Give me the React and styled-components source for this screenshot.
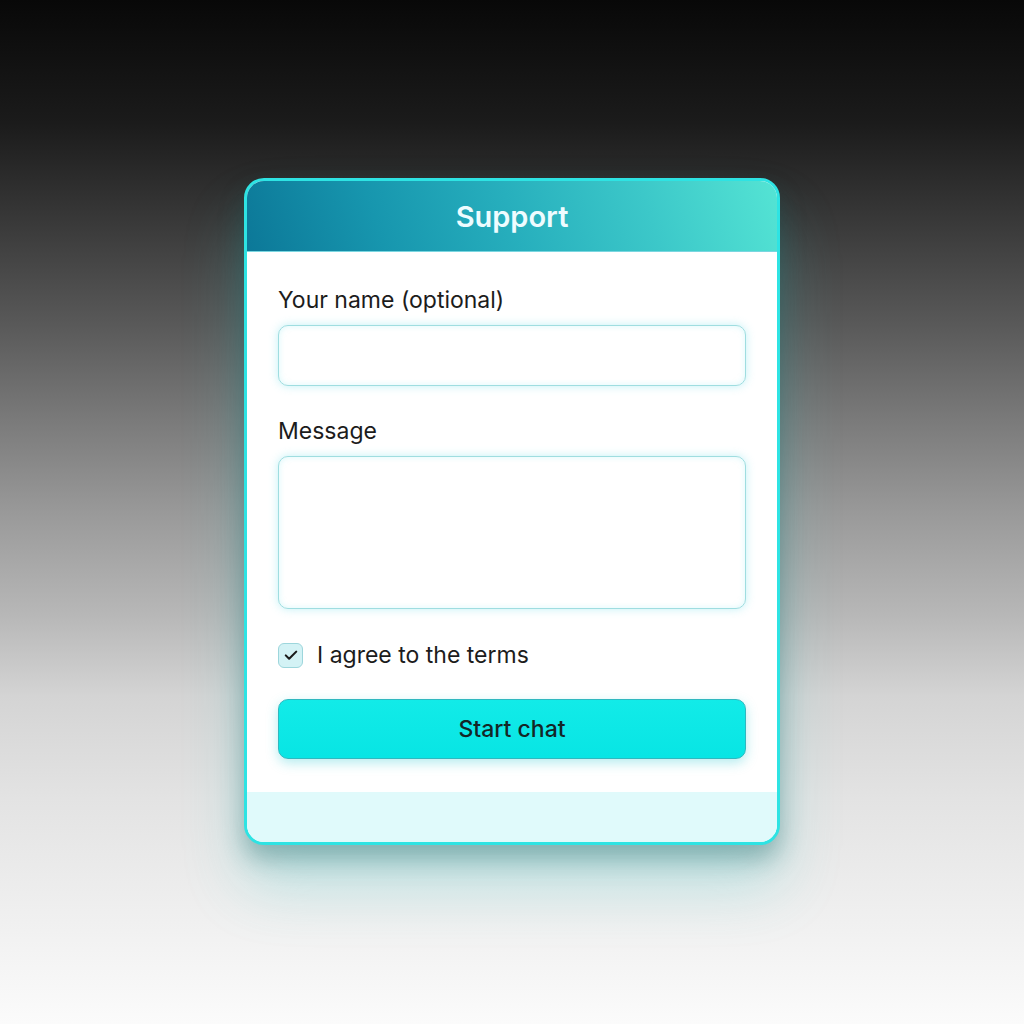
import React from "react";
import styled, { createGlobalStyle } from "styled-components";

const Global = createGlobalStyle`
  html, body { margin: 0; padding: 0; }
  body {
    font-family: Inter, "Noto Sans", sans-serif;
    background: linear-gradient(180deg, #080808 0%, #1b1b1b 12%, #3a3a3a 22%, #5a5a5a 32%, #7a7a7a 41%, #999999 50%, #b7b7b7 60%, #d4d4d4 68%, #e3e3e3 78%, #f0f0f0 90%, #fbfbfb 100%);
    min-height: 1024px;
  }
`;

const Page = styled.div`
  height: 1024px;
  display: flex;
  justify-content: center;
  padding-top: 178px;
  box-sizing: border-box;
`;

const Card = styled.div`
  width: 536px;
  height: 667px;
  box-sizing: border-box;
  border: 3px solid #2ee3e3;
  border-radius: 20px;
  overflow: hidden;
  display: flex;
  flex-direction: column;
  background: #ffffff;
  box-shadow: 0 14px 24px rgba(20, 90, 90, 0.35), 0 40px 60px rgba(60, 200, 200, 0.28);
`;

const Header = styled.div`
  height: 70px;
  display: flex;
  align-items: center;
  justify-content: center;
  background: linear-gradient(72deg, #0c7898 0%, #1796ae 25%, #27afbd 50%, #3cc8c9 75%, #54e4d4 100%);
  border-bottom: 1px solid #7ad6e0;
`;

const Title = styled.h1`
  margin: 0;
  font-size: 29px;
  font-weight: 600;
  color: #eefcff;
`;

const Body = styled.div`
  padding: 34px 31px 33px;
  display: flex;
  flex-direction: column;
`;

const Field = styled.div`
  display: flex;
  flex-direction: column;
  gap: 11px;
  margin-bottom: ${(p) => p.$mb || 0}px;
`;

const Label = styled.label`
  font-size: 23px;
  line-height: 28px;
  color: #1c1c1c;
`;

const inputStyles = `
  box-sizing: border-box;
  width: 100%;
  border: 1.5px solid #9fdde0;
  border-radius: 10px;
  background: #ffffff;
  box-shadow: 0 0 10px rgba(120, 225, 235, 0.45), inset 0 0 6px rgba(150, 235, 240, 0.35);
  outline: none;
  font-family: Inter, sans-serif;
  font-size: 18px;
  padding: 0 14px;
`;

const Input = styled.input`
  ${inputStyles}
  height: 61px;
`;

const TextArea = styled.textarea`
  ${inputStyles}
  height: 153px;
  resize: none;
  padding: 14px;
`;

const CheckRow = styled.div`
  display: flex;
  align-items: center;
  gap: 14px;
  margin-bottom: 30px;
  height: 28px;
`;

const Box = styled.span`
  width: 25px;
  height: 25px;
  box-sizing: border-box;
  border: 1.5px solid #9dd6dc;
  border-radius: 6px;
  background: #d3f2f5;
  display: flex;
  align-items: center;
  justify-content: center;
`;

const CheckText = styled.span`
  font-size: 23px;
  color: #1c1c1c;
`;

const Button = styled.button`
  height: 60px;
  width: 100%;
  border: 1.5px solid #2fb8bf;
  border-radius: 10px;
  background: linear-gradient(180deg, #12ebe8 0%, #08e5e4 100%);
  font-family: Inter, sans-serif;
  font-size: 23px;
  font-weight: 500;
  color: #142626;
  box-shadow: 0 4px 12px rgba(40, 200, 210, 0.35);
  cursor: pointer;
`;

const Footer = styled.div`
  flex: 1;
  background: #e0fafb;
`;

export default function App() {
  return (
    <>
      <Global />
      <Page>
        <Card>
          <Header>
            <Title>Support</Title>
          </Header>
          <Body>
            <Field $mb={31}>
              <Label>Your name (optional)</Label>
              <Input />
            </Field>
            <Field $mb={32}>
              <Label>Message</Label>
              <TextArea />
            </Field>
            <CheckRow>
              <Box>
                <svg width="18" height="18" viewBox="0 0 24 24" fill="none" stroke="#1a1a1a" strokeWidth="2.8" strokeLinecap="round" strokeLinejoin="round">
                  <path d="M5 12.5l4.5 4.5L19 7.5" />
                </svg>
              </Box>
              <CheckText>I agree to the terms</CheckText>
            </CheckRow>
            <Button>Start chat</Button>
          </Body>
          <Footer />
        </Card>
      </Page>
    </>
  );
}
